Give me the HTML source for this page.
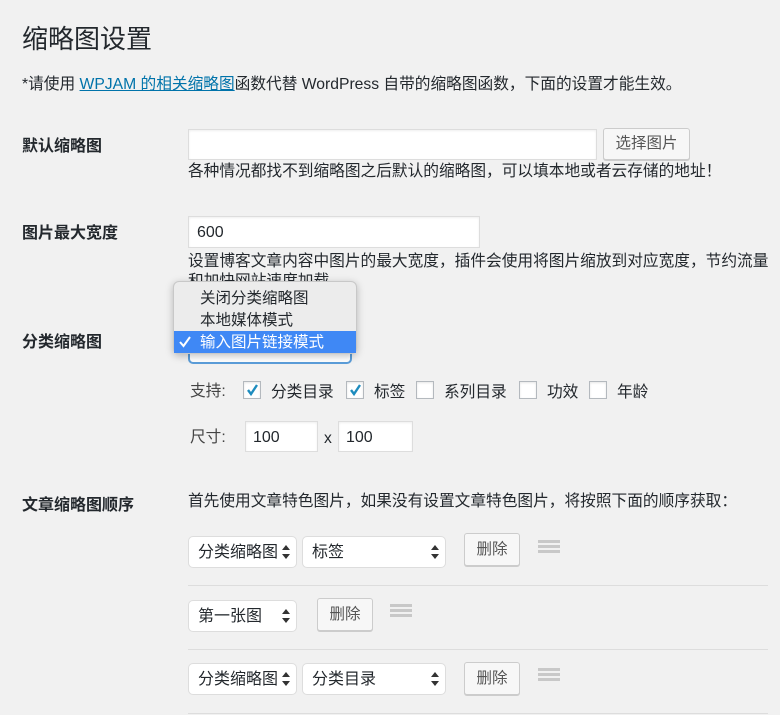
<!DOCTYPE html>
<html><head><meta charset="utf-8"><style>
body{margin:0;width:780px;height:715px;background:#f1f1f1;overflow:hidden;position:relative;font-family:"Liberation Sans","Noto Sans CJK SC",sans-serif;color:#23282d;font-size:15.7px}
.a{position:absolute;white-space:nowrap;line-height:20px;margin-top:2px}
.b{font-weight:bold;font-size:16px}
.inp{position:absolute;background:#fff;border:1px solid #ddd;box-shadow:inset 0 1px 2px rgba(0,0,0,.07);box-sizing:border-box;font-size:16px;line-height:31px;padding-left:8px}
.btn{position:absolute;background:#f7f7f7;border:1px solid #ccc;border-radius:3px;box-shadow:0 1px 0 #ccc;box-sizing:border-box;text-align:center;font-size:15.5px;color:#555}
.sel{position:absolute;background:#fff;border:1px solid #ddd;border-radius:5px;box-sizing:border-box;font-size:16px;line-height:31px;padding-left:9px;height:32px}
.sel:after{content:"";position:absolute;right:6px;top:8px;border:4px solid transparent;border-bottom:5px solid #333;border-top:0}
.sel:before{content:"";position:absolute;right:6px;top:17px;border:4px solid transparent;border-top:5px solid #333;border-bottom:0}
.cb{position:absolute;width:18px;height:18px;background:#fff;border:1px solid #b4b9be;box-sizing:border-box;box-shadow:inset 0 1px 2px rgba(0,0,0,.1)}
.cb svg{position:absolute;left:1px;top:1px}
.hr{position:absolute;left:188px;width:580px;border-top:1px solid #ddd}
.ham{position:absolute;width:22px;height:13px;background:linear-gradient(#c8c8c8 0 3px,transparent 3px 5px,#c8c8c8 5px 8px,transparent 8px 10px,#c8c8c8 10px 13px)}
</style></head><body>
<div class="a" style="left:22px;top:20px;font-size:26px;line-height:34px">缩略图设置</div>
<div class="a" style="left:22px;top:73px">*请使用 <span style="color:#0073aa;text-decoration:underline">WPJAM 的相关缩略图</span>函数代替 WordPress 自带的缩略图函数，下面的设置才能生效。</div>

<div class="a b" style="left:22px;top:135px">默认缩略图</div>
<div class="inp" style="left:188px;top:129px;width:409px;height:31px"></div>
<div class="btn" style="left:603px;top:128px;width:87px;height:32px;line-height:30px">选择图片</div>
<div class="a" style="left:188px;top:160px">各种情况都找不到缩略图之后默认的缩略图，可以填本地或者云存储的地址！</div>

<div class="a b" style="left:22px;top:222px">图片最大宽度</div>
<div class="inp" style="left:188px;top:216px;width:292px;height:32px">600</div>
<div class="a" style="left:188px;top:250px">设置博客文章内容中图片的最大宽度，插件会使用将图片缩放到对应宽度，节约流量</div>
<div class="a" style="left:188px;top:270px">和加快网站速度加载。</div>

<div class="a b" style="left:22px;top:331px">分类缩略图</div>
<div style="position:absolute;left:188px;top:336px;width:160px;height:24px;border:2px solid #5b9dd9;border-radius:5px;background:#fff"></div>
<div style="position:absolute;left:173px;top:281px;width:184px;height:73px;background:#ececec;border-radius:6px;box-shadow:0 2px 8px rgba(0,0,0,.25);border:1px solid #c8c8c8;box-sizing:border-box"></div>
<div class="a" style="left:200px;top:287px;font-size:15.5px">关闭分类缩略图</div>
<div class="a" style="left:200px;top:309px;font-size:15.5px">本地媒体模式</div>
<div style="position:absolute;left:174px;top:331px;width:182px;height:22px;background:#3f88f5"></div>
<svg style="position:absolute;left:179px;top:336px" width="12" height="12"><path d="M1 6l3.5 4L11 1" stroke="#fff" stroke-width="2" fill="none"/></svg>
<div class="a" style="left:200px;top:331px;color:#fff;font-size:15.5px">输入图片链接模式</div>

<div class="a" style="left:190px;top:380px;color:#444">支持:</div>
<div class="cb" style="left:243px;top:381px"><svg width="14" height="14"><path d="M3 7l3 4L12 2" stroke="#1e8cbe" stroke-width="2.4" fill="none"/></svg></div>
<div class="a" style="left:271px;top:381px">分类目录</div>
<div class="cb" style="left:346px;top:381px"><svg width="14" height="14"><path d="M3 7l3 4L12 2" stroke="#1e8cbe" stroke-width="2.4" fill="none"/></svg></div>
<div class="a" style="left:374px;top:381px">标签</div>
<div class="cb" style="left:416px;top:381px"></div>
<div class="a" style="left:444px;top:381px">系列目录</div>
<div class="cb" style="left:519px;top:381px"></div>
<div class="a" style="left:547px;top:381px">功效</div>
<div class="cb" style="left:589px;top:381px"></div>
<div class="a" style="left:617px;top:381px">年龄</div>

<div class="a" style="left:190px;top:426px;color:#444">尺寸:</div>
<div class="inp" style="left:245px;top:421px;width:73px;height:31px;padding-left:7px">100</div>
<div class="a" style="left:324px;top:427px">x</div>
<div class="inp" style="left:338px;top:421px;width:75px;height:31px;padding-left:7px">100</div>

<div class="a b" style="left:22px;top:494px">文章缩略图顺序</div>
<div class="a" style="left:188px;top:490px">首先使用文章特色图片，如果没有设置文章特色图片，将按照下面的顺序获取：</div>

<div class="sel" style="left:188px;top:536px;width:109px">分类缩略图</div>
<div class="sel" style="left:302px;top:536px;width:144px">标签</div>
<div class="btn" style="left:464px;top:533px;width:56px;height:33px;line-height:31px">删除</div>
<div class="ham" style="left:538px;top:540px"></div>
<div class="hr" style="top:585px"></div>

<div class="sel" style="left:188px;top:600px;width:109px">第一张图</div>
<div class="btn" style="left:317px;top:598px;width:56px;height:33px;line-height:31px">删除</div>
<div class="ham" style="left:390px;top:604px"></div>
<div class="hr" style="top:649px"></div>

<div class="sel" style="left:188px;top:663px;width:109px">分类缩略图</div>
<div class="sel" style="left:302px;top:663px;width:144px">分类目录</div>
<div class="btn" style="left:464px;top:662px;width:56px;height:33px;line-height:31px">删除</div>
<div class="ham" style="left:538px;top:668px"></div>
<div class="hr" style="top:713px"></div>
</body></html>
